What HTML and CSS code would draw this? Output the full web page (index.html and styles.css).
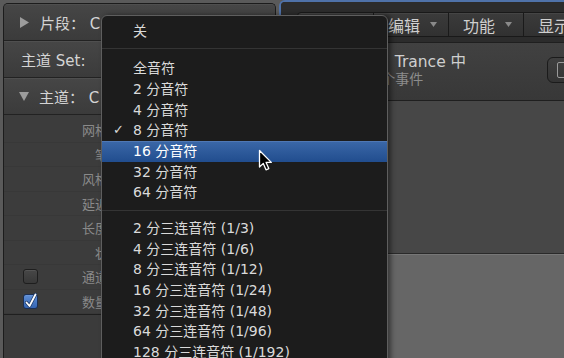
FILE: index.html
```html
<!DOCTYPE html>
<html lang="zh-CN">
<head>
<meta charset="utf-8">
<title>主道 网格</title>
<link rel="stylesheet" href="styles.css">
</head>
<body>
<div class="screen">
  <aside class="inspector">
    <div class="head-row">
      <svg class="tri" width="9" height="11" viewBox="0 0 9 11"><polygon points="0,0 9,5.5 0,11" fill="#9c9c9c"/></svg>
      <span>片段： C</span>
    </div>
    <div class="head-row set"><span>主道 Set:</span></div>
    <div class="head-row">
      <svg class="tri down" width="10" height="9" viewBox="0 0 10 9"><polygon points="0,0 10,0 5,9" fill="#9c9c9c"/></svg>
      <span>主道： C</span>
    </div>
    <div class="params">
      <div class="param"><span class="cb-slot"></span><span class="label">网格</span></div>
      <div class="param"><span class="cb-slot"></span><span class="label">笔</span></div>
      <div class="param"><span class="cb-slot"></span><span class="label">风格</span></div>
      <div class="param"><span class="cb-slot"></span><span class="label">延迟</span></div>
      <div class="param"><span class="cb-slot"></span><span class="label">长度</span></div>
      <div class="param"><span class="cb-slot"></span><span class="label">状</span></div>
      <div class="param"><span class="cb-slot"><span class="cb"></span></span><span class="label">通道</span></div>
      <div class="param"><span class="cb-slot"><span class="cb on"><svg class="tick" width="15" height="17" viewBox="0 0 15 17"><path d="M3.5 10.5 L6.5 14 L12.5 2.5" fill="none" stroke="#203a66" stroke-width="3.4" stroke-linecap="round" stroke-linejoin="round"/><path d="M3.5 10.5 L6.5 14 L12.5 2.5" fill="none" stroke="#ffffff" stroke-width="1.8" stroke-linecap="round" stroke-linejoin="round"/></svg></span></span><span class="label">数量</span></div>
    </div>
    <div class="foot"></div>
  </aside>

  <main class="window">
    <div class="toolbar">
      <div class="btn-group">
        <div class="btn b1"><span>Lane</span><svg class="caret" width="7" height="5" viewBox="0 0 7 5"><polygon points="0,0 7,0 3.5,5" fill="#8a8a8a"/></svg></div>
        <div class="btn"><span>编辑</span><svg class="caret" width="7" height="5" viewBox="0 0 7 5"><polygon points="0,0 7,0 3.5,5" fill="#8a8a8a"/></svg></div>
        <div class="btn"><span>功能</span><svg class="caret" width="7" height="5" viewBox="0 0 7 5"><polygon points="0,0 7,0 3.5,5" fill="#8a8a8a"/></svg></div>
        <div class="btn"><span>显示</span></div>
      </div>
    </div>
    <div class="info">
      <div class="info-text">
        <div class="title"><span class="lead">Dark</span> Trance 中</div>
        <div class="sub">16 个事件</div>
      </div>
      <div class="round-btn"><span class="rb-icon"></span></div>
    </div>
    <div class="list"></div>
    <div class="lower"></div>
  </main>

  <div class="menu">
    <div class="item">关</div>
    <div class="sep sep-a"></div>
    <div class="item">全音符</div>
    <div class="item">2 分音符</div>
    <div class="item">4 分音符</div>
    <div class="item checked"><span class="check">✓</span>8 分音符</div>
    <div class="item selected">16 分音符</div>
    <div class="item">32 分音符</div>
    <div class="item">64 分音符</div>
    <div class="sep sep-b"></div>
    <div class="item">2 分三连音符 (1/3)</div>
    <div class="item">4 分三连音符 (1/6)</div>
    <div class="item">8 分三连音符 (1/12)</div>
    <div class="item">16 分三连音符 (1/24)</div>
    <div class="item">32 分三连音符 (1/48)</div>
    <div class="item">64 分三连音符 (1/96)</div>
    <div class="item">128 分三连音符 (1/192)</div>
  </div>

  <svg class="cursor" width="16" height="24" viewBox="0 0 16 24">
    <path d="M1.5 1.5 L1.5 18 L5.3 14.4 L8 20.8 L10.8 19.6 L8.1 13.4 L13.3 13.4 Z" fill="#000" stroke="#fff" stroke-width="1.3" stroke-linejoin="round"/>
  </svg>
</div>
</body>
</html>
```

FILE: styles.css
```css
* { box-sizing: border-box; margin: 0; padding: 0; }

html, body {
  width: 564px;
  height: 358px;
  overflow: hidden;
  background: #5a5a5a;
}

body {
  font-family: "DejaVu Sans", "Noto Sans CJK SC", sans-serif;
}

.screen {
  position: relative;
  width: 564px;
  height: 358px;
  display: flex;
  align-items: flex-start;
  gap: 3px;
  padding-left: 3px;
  background: #5a5a5a;
  overflow: hidden;
}

/* ---------- left inspector ---------- */
.inspector {
  width: 273px;
  flex: none;
  align-self: stretch;
  margin-top: 3px;
  border: 1px solid #1c1c1c;
  border-bottom: none;
  border-radius: 5px 5px 0 0;
  background: #3c3c3c;
  display: flex;
  flex-direction: column;
  overflow: hidden;
}

.head-row {
  height: 37px;
  flex: none;
  display: flex;
  align-items: center;
  padding-left: 16px;
  border-bottom: 1px solid #222;
  background: linear-gradient(#464646, #3b3b3b);
  box-shadow: inset 0 1px 0 rgba(255, 255, 255, 0.05);
  color: #d4d4d4;
  font-size: 15px;
  white-space: nowrap;
}

.head-row.set { padding-left: 17px; }

.tri { margin-right: 11px; flex: none; }
.tri.down { margin-left: -1px; margin-right: 10px; }

.params {
  padding-top: 3px;
  flex: none;
}

.param {
  height: 24.5px;
  display: flex;
  align-items: center;
  border-bottom: 1px solid #383838;
}

.cb-slot {
  width: 15px;
  height: 15px;
  margin-left: 19px;
  flex: none;
}

.cb {
  display: block;
  position: relative;
  width: 15px;
  height: 15px;
  border-radius: 3px;
  border: 1px solid #1e1e1e;
  background: linear-gradient(#474747, #383838);
  box-shadow: inset 0 1px 0 rgba(255, 255, 255, 0.08);
}

.cb.on {
  background: linear-gradient(#5f8fd6, #3565b2);
  border-color: #1b2f55;
}

.tick {
  position: absolute;
  left: -1px;
  top: -3px;
  overflow: visible;
}

.label {
  width: 70px;
  text-align: right;
  font-size: 13px;
  color: #8a8a8a;
  white-space: nowrap;
}

.foot {
  flex: 1;
  border-top: 1px solid #1f1f1f;
  background: #3b3b3b;
}

/* ---------- right window ---------- */
.window {
  width: 300px;
  flex: none;
  align-self: stretch;
  border-top: 2px solid #4f72a9;
  border-left: 2px solid #4f72a9;
  border-top-left-radius: 6px;
  background: #2c2c2c;
  display: flex;
  flex-direction: column;
  overflow: hidden;
}

.toolbar {
  height: 40px;
  flex: none;
  padding: 10px 0 0 16px;
  background: #2c2c2c;
}

.btn-group {
  display: flex;
  height: 25px;
  border: 1px solid #191919;
  border-radius: 4px;
  background: linear-gradient(#3b3b3b, #313131);
  box-shadow: inset 0 1px 0 rgba(255, 255, 255, 0.05);
  width: max-content;
}

.btn {
  width: 75px;
  display: flex;
  align-items: center;
  gap: 10px;
  padding-left: 14px;
  border-right: 1px solid #1a1a1a;
  color: #cfcfcf;
  font-size: 16px;
  white-space: nowrap;
}

.btn.b1 { width: 76px; }
.btn:last-child { border-right: none; width: 60px; }

.info {
  height: 59px;
  flex: none;
  display: flex;
  justify-content: space-between;
  align-items: flex-start;
  padding: 11px 4px 0 67px;
  border-top: 1px solid #1f1f1f;
  border-bottom: 1px solid #1f1f1f;
  background: linear-gradient(#414141, #383838);
}

.title {
  margin-left: 1px;
  font-size: 15.5px;
  line-height: 17px;
  color: #cfcfcf;
  white-space: nowrap;
}

.lead { margin-right: 4px; }

.sub {
  margin-left: 11px;
  font-size: 14px;
  line-height: 17px;
  color: #8c8c8c;
  white-space: nowrap;
}

.round-btn {
  width: 28px;
  height: 26px;
  margin-top: 3px;
  border: 1px solid #1b1b1b;
  border-radius: 6px;
  background: linear-gradient(#404040, #343434);
  padding: 4px 0 0 9px;
}

.rb-icon {
  display: block;
  width: 10px;
  height: 16px;
  border: 1px solid #9a9a9a;
  border-radius: 2px;
}

.list {
  height: 153px;
  flex: none;
  background: #474747;
  border-bottom: 1px solid #2a2a2a;
}

.lower {
  flex: 1;
  border-top: 1px solid #777;
  background: #666;
}

/* ---------- popup menu ---------- */
.menu {
  position: absolute;
  left: 101px;
  top: 15px;
  width: 287px;
  height: 360px;
  padding-top: 4.67px;
  background: #1c1c1c;
  border: 1px solid #5e5e5e;
  border-radius: 6px 6px 0 0;
  box-shadow: 3px 0 5px rgba(0, 0, 0, 0.45);
  color: #dadada;
  font-size: 14px;
}

.item {
  position: relative;
  height: 20.67px;
  line-height: 20.67px;
  padding-left: 31px;
  white-space: nowrap;
}

.item.selected {
  background: linear-gradient(#3b68a8, #214d8e);
  box-shadow: inset 0 1px 0 #4f78b4;
  color: #ffffff;
}

.check {
  position: absolute;
  left: 11px;
  top: 0;
  width: 14px;
  font-size: 13px;
}

.sep { position: relative; }
.sep-a { height: 17px; }
.sep-b { height: 15px; }

.sep::after {
  content: "";
  position: absolute;
  left: 0;
  right: 0;
  top: 7px;
  height: 1px;
  background: #343434;
}

.cursor {
  position: absolute;
  left: 258px;
  top: 149px;
}
```
